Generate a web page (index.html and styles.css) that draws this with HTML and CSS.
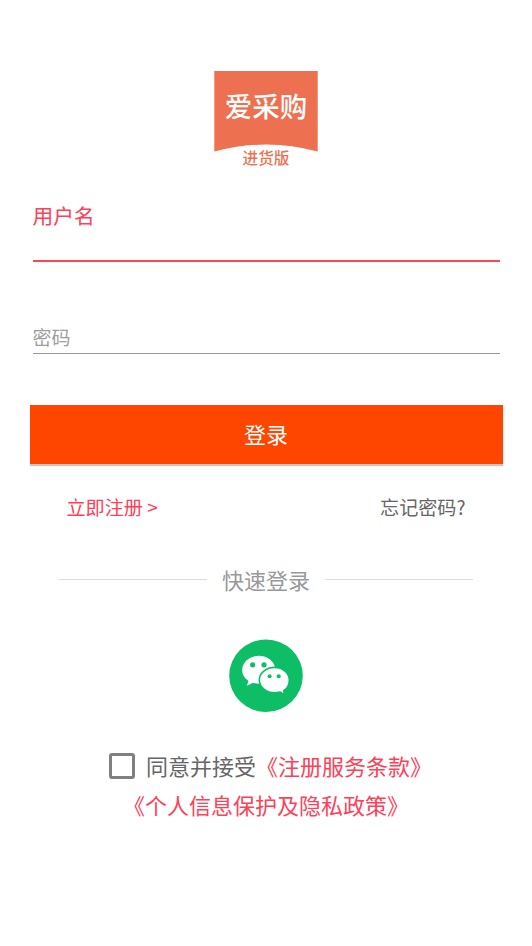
FILE: index.html
```html
<!DOCTYPE html>
<html lang="zh-CN">
<head>
<meta charset="utf-8">
<title>登录</title>
<link rel="stylesheet" href="styles.css">
</head>
<body>
<main class="page">
  <svg class="logo" viewBox="0 0 104 100" role="img">
    <path fill="#ed7050" d="M0.300 0H103.700V80.500Q52 66.500 0.300 80.500Z"/>
    <text class="logo-name" x="52" y="46" text-anchor="middle">爱采购</text>
    <text class="logo-sub" x="52" y="93" text-anchor="middle">进货版</text>
  </svg>
  <form class="form">
    <div class="field field-active"><label>用户名</label></div>
    <div class="field field-idle"><label>密码</label></div>
    <button class="submit" type="button">登录</button>
  </form>
  <nav class="links">
    <a class="register">立即注册 &gt;</a>
    <a class="forgot">忘记密码?</a>
  </nav>
  <div class="divider"><span>快速登录</span></div>
  <svg class="wechat" viewBox="0 0 74 74">
    <ellipse cx="37" cy="36.700" rx="36.800" ry="36.300" fill="#0dbe66"/>
    <path fill="#fff" d="M29.800 16.800C20.500 16.800 13.200 23.300 13.200 31.200C13.200 35.600 15.500 39.300 19.400 41.800L18 46.800L24 43.800C27 44.800 30 45 33 44.600C40 43 46 37 46.500 30C45.500 22.500 38.500 16.800 29.800 16.800Z"/>
    <path fill="#fff" stroke="#0dbe66" stroke-width="1.600" d="M45.700 28.400C37.300 28.400 30.300 34 30.300 41C30.300 48 37.300 53.800 45.700 53.800C47.600 53.800 49.400 53.500 51.200 53L55.500 55.700L54.700 51.600C58.600 49.500 60.300 45.300 60.300 41C60.300 34 53.700 28.400 45.700 28.400Z"/>
    <g fill="#0dbe66"><circle cx="23.700" cy="25.800" r="2.600"/><circle cx="35" cy="25.800" r="2.600"/><circle cx="40.600" cy="37.300" r="2"/><circle cx="49.700" cy="37.300" r="2"/></g>
  </svg>
  <div class="agreement">
    <div class="agree-row agree-main">
      <span class="checkbox"></span>
      <span>同意并接受<a>《注册服务条款》</a></span>
    </div>
    <div class="agree-row"><a>《个人信息保护及隐私政策》</a></div>
  </div>
</main>
</body>
</html>
```
FILE: styles.css
```css
* {
  box-sizing: border-box;
}

body {
  margin: 0;
  background: #fff;
  font-family: "Noto Sans CJK SC", sans-serif;
}

.page {
  display: flex;
  flex-direction: column;
  align-items: center;
  width: 532px;
  height: 946px;
  padding-top: 71px;
}

.logo {
  width: 104px;
  height: 100px;
}

.logo-name {
  fill: #fff;
  font-size: 27.5px;
  font-weight: 500;
}

.logo-sub {
  fill: #ed7050;
  font-size: 15.6px;
  font-weight: 500;
}

.form {
  width: 473px;
  margin-top: 30px;
}

.field {
  margin: 0 3px;
}

.field-active {
  height: 61px;
  border-bottom: 2px solid #ff4656;
  color: #ff4058;
  font-size: 20.7px;
  line-height: 28px;
}

.field-idle {
  height: 29px;
  margin-top: 63px;
  border-bottom: 1px solid #999;
  color: #9e9e9e;
  font-size: 19px;
  line-height: 24px;
}

.submit {
  display: block;
  width: 473px;
  height: 59px;
  margin-top: 51px;
  padding: 0 0 2px;
  border: 0;
  background: #ff4600;
  box-shadow: 0 2px 1px rgba(0, 0, 0, 0.22);
  color: #fff;
  font: 22px/57px "Noto Sans CJK SC", sans-serif;
}

.links {
  display: flex;
  justify-content: space-between;
  width: 399px;
  margin-top: 29px;
  font-size: 19.1px;
  line-height: 28px;
}

.register,
.agreement a {
  color: #ff4058;
}

.forgot {
  color: #666;
}

.divider {
  display: flex;
  align-items: center;
  gap: 15px;
  width: 414px;
  margin-top: 42px;
  color: #999;
  font-size: 22px;
  line-height: 32px;
}

.divider::before,
.divider::after {
  content: "";
  flex: 1;
  height: 1px;
  background: #ddd;
}

.wechat {
  width: 74px;
  height: 74px;
  margin-top: 44px;
}

.agreement {
  margin-top: 33px;
  color: #666;
  font-size: 22px;
  line-height: 39px;
}

.agree-row {
  display: flex;
  align-items: center;
  justify-content: center;
  gap: 11px;
  height: 39px;
}

.agree-main {
  padding-left: 9px;
}

.checkbox {
  width: 26px;
  height: 26px;
  border: 3px solid #808080;
  border-radius: 3px;
}
```
